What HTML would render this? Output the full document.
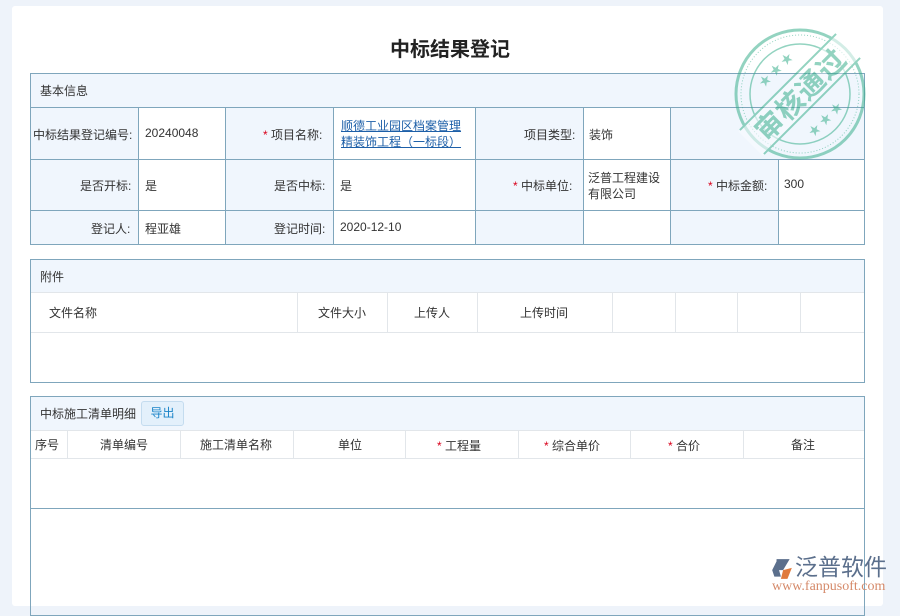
<!DOCTYPE html>
<html><head><meta charset="utf-8"><style>
*{margin:0;padding:0;box-sizing:border-box}
body{width:900px;height:600px;overflow:hidden;background:#eef3fa;font-family:"Liberation Sans","Noto Sans CJK SC",sans-serif;font-size:12px;color:#333;position:relative}
.card{position:absolute;left:12px;top:6px;width:871px;height:600px;background:#fff;border-radius:3px}
.a{position:absolute}
.box{position:absolute;border:1px solid #7fa6bc}
.hd{position:absolute;background:#f0f6fd}
.vl{position:absolute;width:1px;background:#7fa6bc}
.hl{position:absolute;height:1px;background:#7fa6bc}
.gl{position:absolute;width:1px;background:#e2e6ea}
.ghl{position:absolute;height:1px;background:#e2e6ea}
.r{color:#d9001b}
</style></head><body>
<div class="card"></div>
<div class="a" style="left:0;top:33px;width:900px;text-align:center;font-size:20px;font-weight:bold;color:#222">中标结果登记</div>

<div class="hd" style="left:30px;top:73px;width:835px;height:172px"></div>
<div class="a" style="left:138px;top:107px;width:87px;height:138px;background:#fff"></div>
<div class="a" style="left:333px;top:107px;width:142px;height:138px;background:#fff"></div>
<div class="a" style="left:583px;top:107px;width:87px;height:138px;background:#fff"></div>
<div class="a" style="left:778px;top:159px;width:87px;height:86px;background:#fff"></div>
<div class="a" style="left:670px;top:107px;width:195px;height:52px;background:#f0f6fd"></div>
<div class="box" style="left:30px;top:73px;width:835px;height:172px"></div>
<div class="hl" style="left:30px;top:107px;width:835px"></div>
<div class="hl" style="left:30px;top:159px;width:835px"></div>
<div class="hl" style="left:30px;top:210px;width:835px"></div>
<div class="vl" style="left:138px;top:107px;height:138px"></div>
<div class="vl" style="left:225px;top:107px;height:138px"></div>
<div class="vl" style="left:333px;top:107px;height:138px"></div>
<div class="vl" style="left:475px;top:107px;height:138px"></div>
<div class="vl" style="left:583px;top:107px;height:138px"></div>
<div class="vl" style="left:670px;top:107px;height:138px"></div>
<div class="vl" style="left:778px;top:159px;height:86px"></div>
<div class="a" style="left:40px;top:82px">基本信息</div>
<div class="a" style="left:33px;top:126px">中标结果登记编号:</div>
<div class="a" style="left:145px;top:126px">20240048</div>
<div class="a" style="left:263px;top:126px"><span class="r">*</span> 项目名称:</div>
<div class="a" style="left:341px;top:118px;color:#1d5fa8;text-decoration:underline;line-height:16px">顺德工业园区档案管理<br>精装饰工程（一标段）</div>
<div class="a" style="left:524px;top:126px">项目类型:</div>
<div class="a" style="left:589px;top:126px">装饰</div>
<div class="a" style="left:80px;top:177px">是否开标:</div>
<div class="a" style="left:145px;top:177px">是</div>
<div class="a" style="left:274px;top:177px">是否中标:</div>
<div class="a" style="left:340px;top:177px">是</div>
<div class="a" style="left:513px;top:177px"><span class="r">*</span> 中标单位:</div>
<div class="a" style="left:588px;top:170px;line-height:16px">泛普工程建设<br>有限公司</div>
<div class="a" style="left:708px;top:177px"><span class="r">*</span> 中标金额:</div>
<div class="a" style="left:784px;top:177px">300</div>
<div class="a" style="left:91px;top:220px">登记人:</div>
<div class="a" style="left:145px;top:220px">程亚雄</div>
<div class="a" style="left:274px;top:220px">登记时间:</div>
<div class="a" style="left:340px;top:220px">2020-12-10</div>

<div class="hd" style="left:30px;top:259px;width:835px;height:33px"></div>
<div class="box" style="left:30px;top:259px;width:835px;height:124px"></div>
<div class="ghl" style="left:31px;top:292px;width:833px"></div>
<div class="ghl" style="left:31px;top:332px;width:833px"></div>
<div class="gl" style="left:297px;top:292px;height:40px"></div>
<div class="gl" style="left:387px;top:292px;height:40px"></div>
<div class="gl" style="left:477px;top:292px;height:40px"></div>
<div class="gl" style="left:612px;top:292px;height:40px"></div>
<div class="gl" style="left:675px;top:292px;height:40px"></div>
<div class="gl" style="left:737px;top:292px;height:40px"></div>
<div class="gl" style="left:800px;top:292px;height:40px"></div>
<div class="a" style="left:40px;top:268px">附件</div>
<div class="a" style="left:49px;top:304px">文件名称</div>
<div class="a" style="left:318px;top:304px">文件大小</div>
<div class="a" style="left:414px;top:304px">上传人</div>
<div class="a" style="left:520px;top:304px">上传时间</div>

<div class="hd" style="left:30px;top:396px;width:835px;height:34px"></div>
<div class="box" style="left:30px;top:396px;width:835px;height:220px"></div>
<div class="ghl" style="left:31px;top:430px;width:833px"></div>
<div class="ghl" style="left:31px;top:458px;width:833px"></div>
<div class="hl" style="left:30px;top:508px;width:835px"></div>
<div class="gl" style="left:67px;top:430px;height:28px"></div>
<div class="gl" style="left:180px;top:430px;height:28px"></div>
<div class="gl" style="left:293px;top:430px;height:28px"></div>
<div class="gl" style="left:405px;top:430px;height:28px"></div>
<div class="gl" style="left:518px;top:430px;height:28px"></div>
<div class="gl" style="left:630px;top:430px;height:28px"></div>
<div class="gl" style="left:743px;top:430px;height:28px"></div>
<div class="a" style="left:40px;top:405px">中标施工清单明细</div>
<div class="a" style="left:141px;top:401px;width:43px;height:25px;border:1px solid #c4dcef;background:#e3f0fb;border-radius:3px;color:#1a84c8;text-align:center;line-height:23px">导出</div>
<div class="a" style="left:35px;top:436px">序号</div>
<div class="a" style="left:100px;top:436px">清单编号</div>
<div class="a" style="left:200px;top:436px">施工清单名称</div>
<div class="a" style="left:338px;top:436px">单位</div>
<div class="a" style="left:437px;top:437px"><span class="r">*</span> 工程量</div>
<div class="a" style="left:544px;top:437px"><span class="r">*</span> 综合单价</div>
<div class="a" style="left:668px;top:437px"><span class="r">*</span> 合价</div>
<div class="a" style="left:791px;top:436px">备注</div>

<svg class="a" style="left:730px;top:24px;opacity:.55" width="140" height="140" viewBox="0 0 140 140">
<circle cx="70" cy="70" r="64" fill="none" stroke="#3bb08e" stroke-width="3"/>
<circle cx="70" cy="70" r="59" fill="none" stroke="#3bb08e" stroke-width="1" stroke-dasharray="1 2"/>
<circle cx="70" cy="70" r="50" fill="none" stroke="#3bb08e" stroke-width="1.5"/>
<g transform="rotate(-45 70 70)">
<rect x="0" y="53" width="140" height="34" fill="#fff" fill-opacity=".6"/>
<line x1="2" y1="53" x2="138" y2="53" stroke="#3bb08e" stroke-width="2"/>
<line x1="2" y1="87" x2="138" y2="87" stroke="#3bb08e" stroke-width="2"/>
<text x="70" y="81" text-anchor="middle" font-size="28" font-weight="bold" fill="#3bb08e" font-family="Noto Sans CJK SC,sans-serif" letter-spacing="1">审核通过</text>
<text x="70" y="40" text-anchor="middle" font-size="12" fill="#3bb08e">★ ★ ★</text>
<text x="70" y="110" text-anchor="middle" font-size="12" fill="#3bb08e">★ ★ ★</text>
</g>
</svg>

<svg class="a" style="left:770px;top:557px" width="24" height="24" viewBox="0 0 22 22"><path d="M6 2h12l-6 10h-6z M2 12l4-8 4 14h-6z" fill="#5b6f8c"/><path d="M12 12l8-2-4 10h-6z" fill="#e07a3c"/></svg>
<div class="a" style="left:795px;top:551px;font-size:23px;color:#5b6f8c;font-family:'Noto Sans CJK SC',sans-serif;line-height:28px">泛普软件</div>
<div class="a" style="left:772px;top:579px;font-size:14px;color:#d58a6a;font-family:'Liberation Serif',serif">www.fanpusoft.com</div>
</body></html>
